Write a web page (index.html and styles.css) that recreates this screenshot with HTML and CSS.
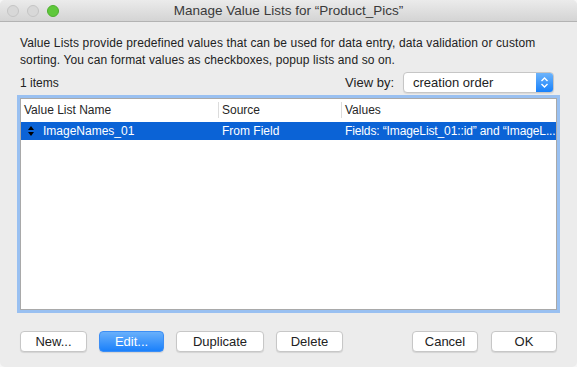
FILE: index.html
```html
<!DOCTYPE html>
<html lang="en">
<head>
    <meta charset="UTF-8">
    <title>Manage Value Lists</title>
    <link rel="stylesheet" href="styles.css">
</head>
<body>
    <div class="window">
        <div class="titlebar">
            <div class="lights">
                <span class="light"></span>
                <span class="light"></span>
                <span class="light green"></span>
            </div>
            <div class="title">Manage Value Lists for “Product_Pics”</div>
            <div></div>
        </div>

        <div class="content">
            <p class="desc">Value Lists provide predefined values that can be used for data entry, data validation or custom sorting. You can format values as checkboxes, popup lists and so on.</p>

            <div class="toolbar">
                <span>1 items</span>
                <div class="view-by">
                    <span>View by:</span>
                    <div class="popup">
                        <span class="popup-text">creation order</span>
                        <span class="popup-arrows">
                            <svg width="9" height="13" viewBox="0 0 9 13">
                                <path d="M1.5 5 L4.5 2 L7.5 5 M1.5 8 L4.5 11 L7.5 8" fill="none" stroke="#fff" stroke-width="1.4"/>
                            </svg>
                        </span>
                    </div>
                </div>
            </div>

            <div class="list">
                <div class="list-head">
                    <div class="col col-name">Value List Name</div>
                    <div class="col col-source">Source</div>
                    <div class="col col-values">Values</div>
                </div>
                <div class="list-row selected">
                    <div class="col col-name">
                        <svg class="handle" width="6" height="10" viewBox="0 0 6 10">
                            <path d="M0 4 L3 0 L6 4 Z M0 6 L3 10 L6 6 Z" fill="#000"/>
                        </svg>
                        ImageNames_01
                    </div>
                    <div class="col col-source">From Field</div>
                    <div class="col col-values">Fields: “ImageList_01::id” and “ImageL...</div>
                </div>
            </div>

            <div class="buttons">
                <div class="group">
                    <button class="btn w-new">New...</button>
                    <button class="btn primary w-edit">Edit...</button>
                    <button class="btn w-dup">Duplicate</button>
                    <button class="btn w-del">Delete</button>
                </div>
                <div class="group">
                    <button class="btn w-cancel">Cancel</button>
                    <button class="btn w-ok">OK</button>
                </div>
            </div>
        </div>
    </div>
</body>
</html>
```

FILE: styles.css
```css
* {
    margin: 0;
    padding: 0;
    box-sizing: border-box;
}
body {
    background: #f6f6f6;
    font-family: "Liberation Sans", Arial, sans-serif;
    font-size: 13px;
    color: #222;
}
.window {
    width: 577px;
    height: 367px;
    background: #ececec;
    border-radius: 5px;
    overflow: hidden;
    display: flex;
    flex-direction: column;
}
.titlebar {
    height: 22px;
    display: grid;
    grid-template-columns: 1fr auto 1fr;
    align-items: center;
    background: linear-gradient(#ebebeb, #d4d4d4);
    border-bottom: 1px solid #b3b3b3;
}
.lights {
    display: flex;
    gap: 8px;
    padding-left: 7px;
}
.light {
    width: 12px;
    height: 12px;
    border-radius: 50%;
    background: #d8d8d8;
    border: 1px solid #c4c4c4;
}
.light.green {
    background: #5fc83b;
    border-color: #4eae2f;
}
.title {
    color: #3a3a3a;
    font-size: 13.5px;
}
.content {
    padding: 13px 20px 0;
    display: flex;
    flex-direction: column;
}
.desc {
    line-height: 17px;
    font-size: 12px;
    letter-spacing: 0.12px;
}
.toolbar {
    margin-top: 3px;
    display: flex;
    justify-content: space-between;
    align-items: center;
    font-size: 12px;
}
.view-by {
    display: flex;
    align-items: center;
    gap: 9px;
    font-size: 13px;
    margin-right: 3px;
}
.popup {
    width: 151px;
    height: 21px;
    display: flex;
    background: #fff;
    border: 1px solid #c6c6c6;
    border-radius: 4px;
    box-shadow: 0 1px 1px rgba(0, 0, 0, 0.08);
    overflow: hidden;
}
.popup-text {
    flex: 1;
    padding-left: 9px;
    line-height: 19px;
    font-size: 13px;
}
.popup-arrows {
    width: 17px;
    display: flex;
    align-items: center;
    justify-content: center;
    background: linear-gradient(#6db4fb, #1881fb);
}
.list {
    margin-top: 5px;
    height: 212px;
    background: #fff;
    border: 1px solid #a9a9a9;
    box-shadow: 0 0 0 3px #99c0f1;
    font-size: 12px;
}
.list-head, .list-row {
    display: flex;
    align-items: center;
}
.list-head {
    height: 22px;
    color: #262626;
}
.list-row {
    height: 18px;
    margin-top: 1px;
}
.list-row.selected {
    background: #0b63d6;
    color: #fff;
}
.col {
    padding-left: 3px;
    white-space: nowrap;
}
.col-name {
    width: 197px;
    display: flex;
    align-items: center;
}
.col-source {
    width: 123px;
}
.col-values {
    flex: 1;
}
.list-head .col-source, .list-head .col-values {
    border-left: 1px solid #dcdcdc;
    height: 16px;
    line-height: 16px;
}
.list-row .col-source {
    padding-left: 4px;
}
.list-row .col-values {
    padding-left: 4px;
    letter-spacing: -0.12px;
}
.handle {
    margin: 0 9px 0 4px;
}
.buttons {
    margin-top: 21px;
    display: flex;
    justify-content: space-between;
}
.group {
    display: flex;
    gap: 12px;
}
.btn {
    height: 21px;
    background: #fff;
    border: 1px solid #c7c7c7;
    border-radius: 4px;
    box-shadow: 0 1px 1px rgba(0, 0, 0, 0.1);
    font-family: "Liberation Sans", Arial, sans-serif;
    font-size: 13px;
    color: #222;
}
.btn.primary {
    background: linear-gradient(#69b0fb, #1a80fb);
    border-color: #3c8ef5;
    color: #fff;
}
.w-new { width: 67px; }
.w-edit { width: 65px; }
.w-dup { width: 88px; }
.w-del { width: 67px; }
.w-cancel { width: 66px; }
.w-ok { width: 66px; }
.group + .group {
    gap: 13px;
}
```
